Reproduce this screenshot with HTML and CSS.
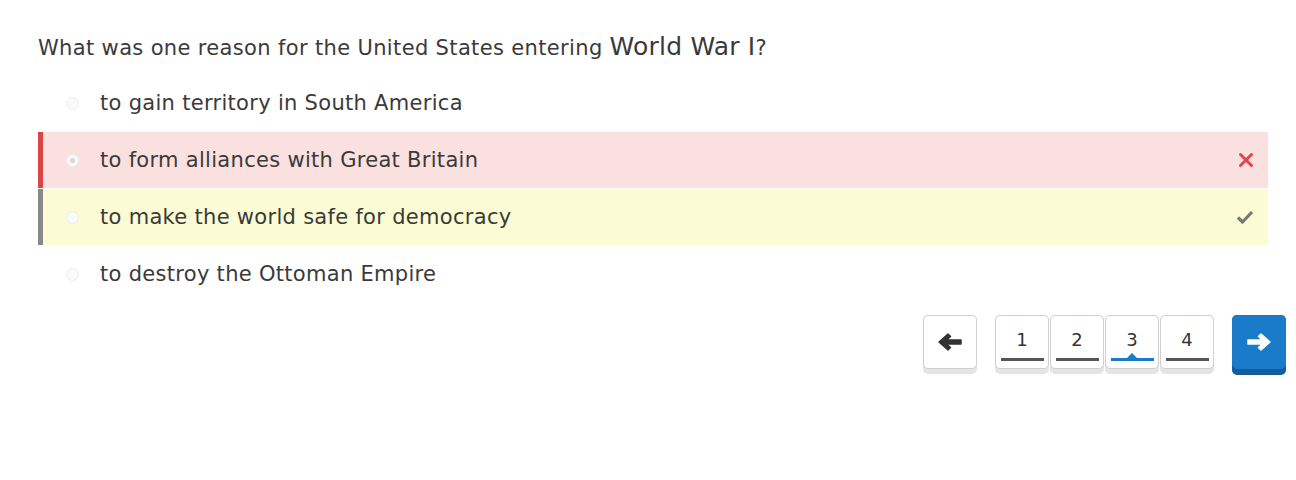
FILE: index.html
```html
<!DOCTYPE html>
<html>
<head>
<meta charset="utf-8">
<link rel="stylesheet" href="styles.css">
</head>
<body>
<div class="quiz">
  <p class="question">What was one reason for the United States entering <span class="big">World War I</span>?</p>
  <ul class="options">
    <li class="option"><span class="radio"></span><span class="label">to gain territory in South America</span></li>
    <li class="option wrong"><span class="radio checked"></span><span class="label">to form alliances with Great Britain</span>
      <svg class="mark" width="16" height="16" viewBox="0 0 16 16"><path d="M2.5 2.5 L13.5 13.5 M13.5 2.5 L2.5 13.5" stroke="#e0474c" stroke-width="3" stroke-linecap="round"/></svg>
    </li>
    <li class="option right"><span class="radio"></span><span class="label">to make the world safe for democracy</span>
      <svg class="mark" width="18" height="16" viewBox="0 0 18 16"><path d="M2 8.5 L6.5 13 L16 3" fill="none" stroke="#777" stroke-width="3.2" stroke-linejoin="round"/></svg>
    </li>
    <li class="option"><span class="radio"></span><span class="label">to destroy the Ottoman Empire</span></li>
  </ul>
  <div class="nav">
    <div class="key"><div class="btn"><svg width="26" height="20" viewBox="0 0 26 20"><path d="M2 10 L11 2 L13.5 4.5 L9.5 8 L24 8 L24 12 L9.5 12 L13.5 15.5 L11 18 Z" fill="#333" stroke="#333" stroke-width="1.5" stroke-linejoin="round"/></svg></div></div>
    <div class="pages">
      <div class="key"><div class="btn page"><span>1</span><i class="bar"></i></div></div>
      <div class="key"><div class="btn page"><span>2</span><i class="bar"></i></div></div>
      <div class="key"><div class="btn page current"><span>3</span><i class="bar"></i></div></div>
      <div class="key"><div class="btn page"><span>4</span><i class="bar"></i></div></div>
    </div>
    <div class="key next"><div class="btn"><svg width="26" height="20" viewBox="0 0 26 20"><path d="M24 10 L15 2 L12.5 4.5 L16.5 8 L2 8 L2 12 L16.5 12 L12.5 15.5 L15 18 Z" fill="#fff" stroke="#fff" stroke-width="1.5" stroke-linejoin="round"/></svg></div></div>
  </div>
</div>
</body>
</html>
```
FILE: styles.css
```css
* { box-sizing: border-box; }
body {
  margin: 0;
  background: #fff;
  font-family: "DejaVu Sans", "Liberation Sans", sans-serif;
  color: #333;
}
.quiz {
  padding: 28px 28px 0 38px;
}
.question {
  margin: 0;
  font-size: 21px;
  line-height: 38px;
  letter-spacing: 0.35px;
  color: #3a3a3a;
}
.big { font-size: 25px; letter-spacing: 0.2px; }
.options {
  list-style: none;
  margin: 8px 0 0 0;
  padding: 0;
}
.option {
  display: flex;
  align-items: center;
  height: 56px;
  padding-left: 23px;
  padding-right: 14px;
  border-left: 5px solid transparent;
  font-size: 21px;
  letter-spacing: 0.3px;
  color: #3a3a3a;
}
.option + .option { margin-top: 1px; }
.option.wrong { background: #fbe0e0; border-left-color: #dc4447; }
.option.right { background: #fbfcd3; border-left-color: #888; }
.radio {
  width: 13px;
  height: 13px;
  border-radius: 50%;
  border: 1px solid #eee;
  background: #fafafa;
  margin-right: 21px;
  flex: none;
  display: flex;
  align-items: center;
  justify-content: center;
}
.radio.checked::after {
  content: "";
  width: 5px; height: 5px; border-radius: 50%;
  background: #e6d0d0;
}
.label { flex: 1; }
.mark { flex: none; }
.nav {
  display: flex;
  justify-content: flex-end;
  align-items: flex-start;
  margin-top: 13px;
  margin-right: -18px;
}
.pages {
  display: flex;
  gap: 1px;
  margin: 0 18px;
}
.key {
  width: 54px;
  padding-bottom: 5px;
  background: #e4e4e4;
  border-radius: 5px;
}
.btn {
  width: 54px;
  height: 54px;
  border: 1px solid #d0d0d0;
  border-radius: 5px;
  background: #fff;
  display: flex;
  align-items: center;
  justify-content: center;
}
.page {
  flex-direction: column;
  font-size: 18px;
  color: #333;
}
.page span { margin-top: 6px; line-height: 20px; }
.bar {
  display: block;
  width: 43px;
  height: 3px;
  background: #555;
  margin-top: 8px;
  position: relative;
}
.current .bar { background: #1a7bc9; }
.current .bar::before {
  content: "";
  position: absolute;
  left: 50%;
  top: -5px;
  margin-left: -5px;
  border-left: 5px solid transparent;
  border-right: 5px solid transparent;
  border-bottom: 5px solid #1a7bc9;
}
.next {
  background: #135c9c;
  padding-bottom: 6px;
}
.next .btn {
  background: #1b7bcb;
  border-color: #1b7bcb;
}
```
